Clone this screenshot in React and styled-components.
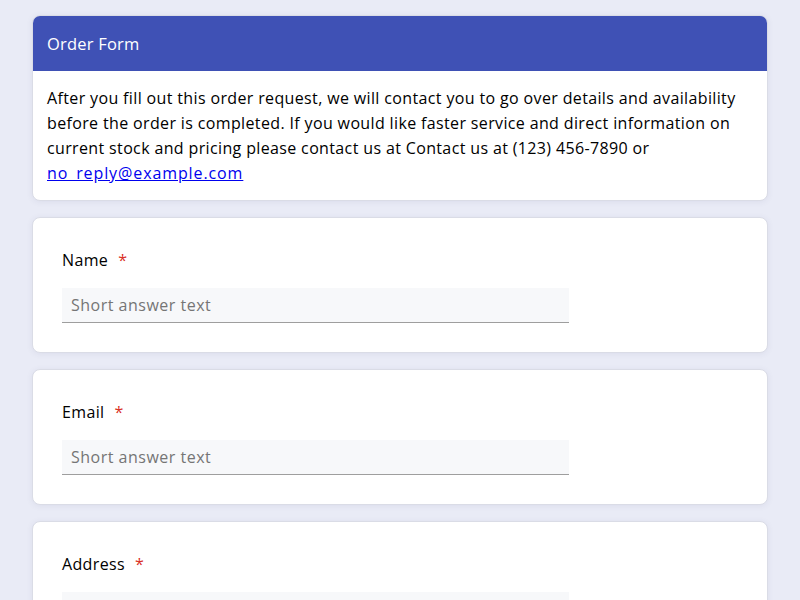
import React from "react";
import styled, { createGlobalStyle } from "styled-components";

const Global = createGlobalStyle`
  html, body { margin: 0; padding: 0; }
  body {
    background: #e9ebf6;
    font-family: "Open Sans", "Noto Sans", sans-serif;
    color: #000;
  }
`;

const Page = styled.div`
  width: 736px;
  margin: 0 auto;
  padding: 15px 0;
  display: flex;
  flex-direction: column;
  gap: 16px;
`;

const Card = styled.div`
  background: #fff;
  border: 1px solid #dadce6;
  border-radius: 8px;
  overflow: hidden;
  box-shadow: 0 1px 6px rgba(60, 64, 120, 0.08);
`;

const Header = styled.div`
  background: #3f51b5;
  color: #fff;
  height: 55px;
  display: flex;
  align-items: center;
  padding: 0 14px;
  font-size: 16.5px;
  letter-spacing: 0.2px;
`;

const Intro = styled.p`
  margin: 0;
  padding: 15px 14px 14px;
  font-size: 16px;
  line-height: 25px;
  letter-spacing: 0.36px;
`;

const Mail = styled.a`
  color: #0000ee;
  text-decoration: underline;
  letter-spacing: 0.9px;
`;

const Question = styled.div`
  padding: 30px 29px 29px;
  display: flex;
  flex-direction: column;
  gap: 16px;
`;

const Label = styled.div`
  font-size: 16px;
  line-height: 24px;
  letter-spacing: 0.35px;
`;

const Star = styled.span`
  color: #d93025;
  margin-left: 10px;
`;

const Input = styled.input`
  width: 507px;
  height: 35px;
  box-sizing: border-box;
  border: none;
  border-bottom: 1px solid #9e9e9e;
  background: #f7f8fa;
  padding: 0 9px;
  font-family: "Open Sans", "Noto Sans", sans-serif;
  font-size: 16px;
  letter-spacing: 0.5px;
  outline: none;
  &::placeholder { color: #757575; }
`;

const fields = ["Name", "Email", "Address"];

export default function App() {
  return (
    <>
      <Global />
      <Page>
        <Card>
          <Header>Order Form</Header>
          <Intro>
            After you fill out this order request, we will contact you to go over details and availability
            before the order is completed. If you would like faster service and direct information on
            current stock and pricing please contact us at Contact us at (123) 456-7890 or{" "}
            <Mail href="#">no_reply@example.com</Mail>
          </Intro>
        </Card>
        {fields.map((f) => (
          <Card key={f}>
            <Question>
              <Label>
                {f}
                <Star>*</Star>
              </Label>
              <Input placeholder="Short answer text" />
            </Question>
          </Card>
        ))}
      </Page>
    </>
  );
}
